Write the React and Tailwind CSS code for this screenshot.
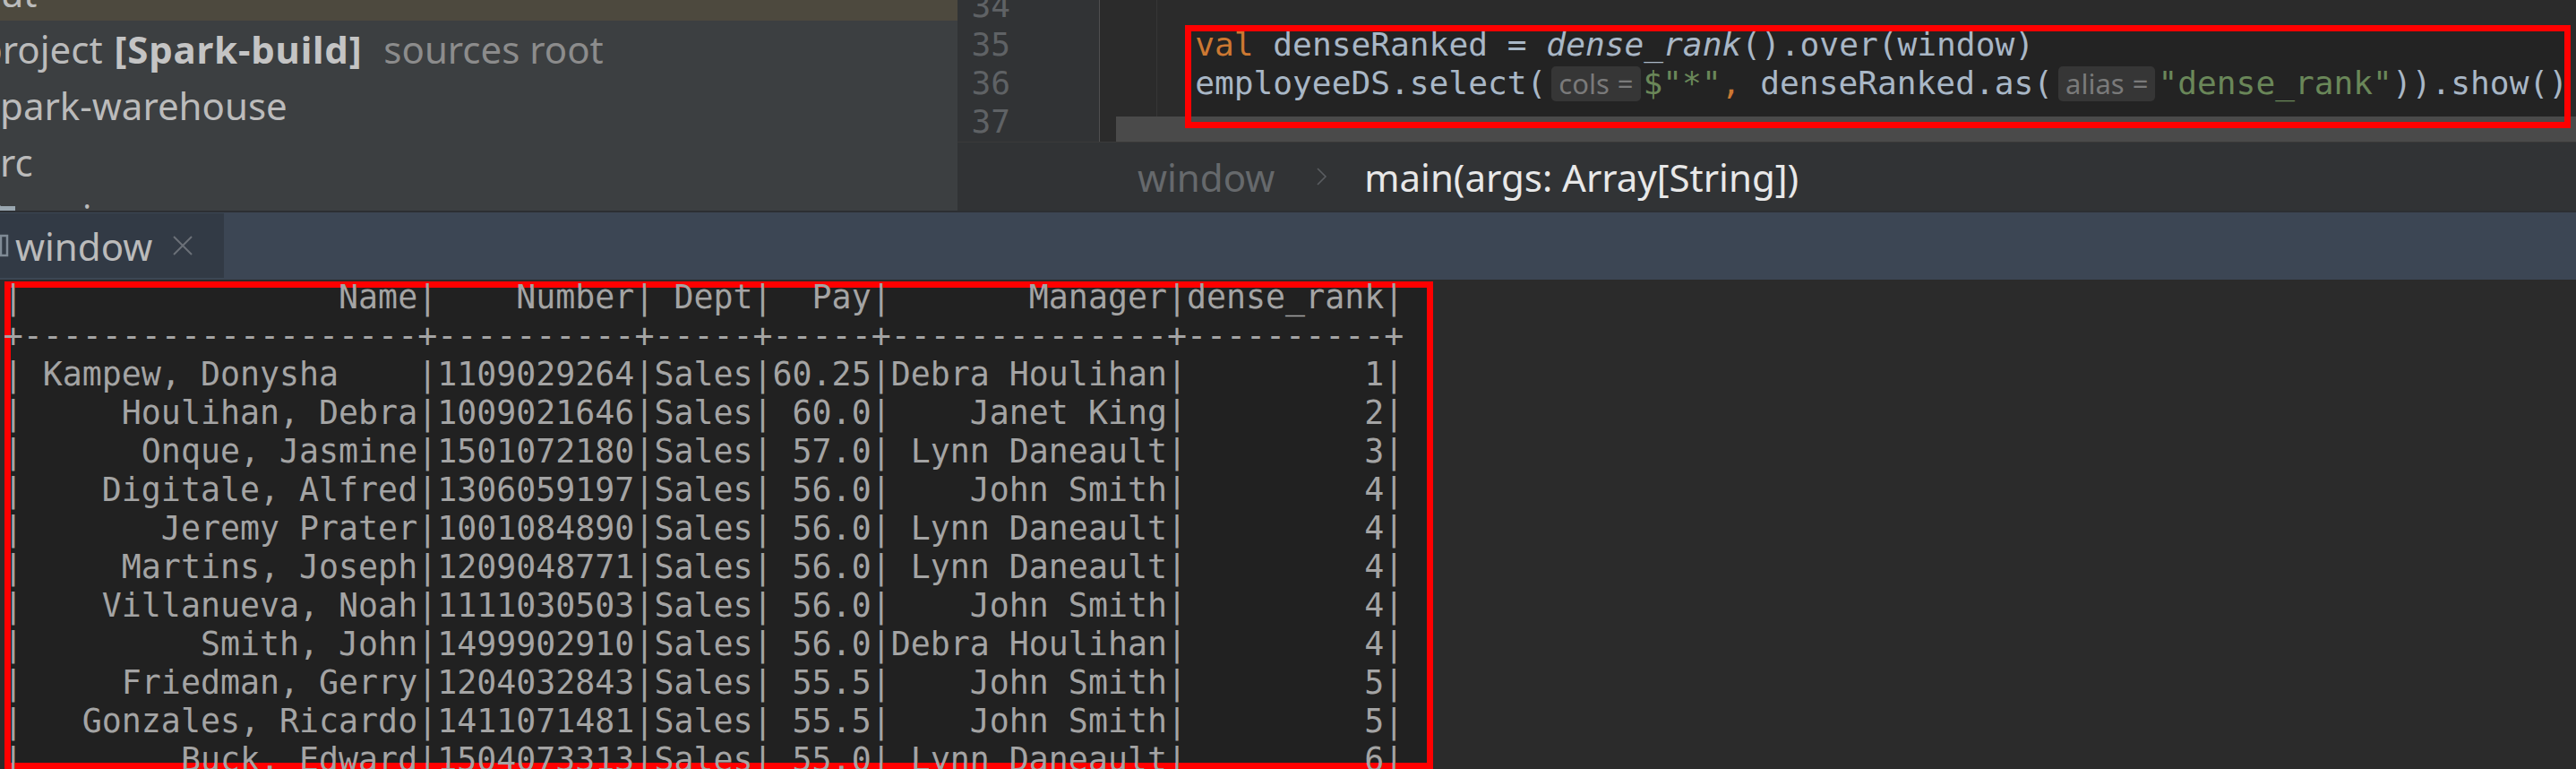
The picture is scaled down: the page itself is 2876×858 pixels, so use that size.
import React from "react"

const UI = "[font-family:'Noto_Sans',sans-serif]"
const MONO = "[font-family:'DejaVu_Sans_Mono',monospace]"

const people = [
  [" Kampew, Donysha    ", "1109029264", "60.25", "Debra Houlihan", "1"],
  ["Houlihan, Debra", "1009021646", "60.0", "Janet King", "2"],
  ["Onque, Jasmine", "1501072180", "57.0", "Lynn Daneault", "3"],
  ["Digitale, Alfred", "1306059197", "56.0", "John Smith", "4"],
  ["Jeremy Prater", "1001084890", "56.0", "Lynn Daneault", "4"],
  ["Martins, Joseph", "1209048771", "56.0", "Lynn Daneault", "4"],
  ["Villanueva, Noah", "1111030503", "56.0", "John Smith", "4"],
  ["Smith, John", "1499902910", "56.0", "Debra Houlihan", "4"],
  ["Friedman, Gerry", "1204032843", "55.5", "John Smith", "5"],
  ["Gonzales, Ricardo", "1411071481", "55.5", "John Smith", "5"],
  ["Buck, Edward", "1504073313", "55.0", "Lynn Daneault", "6"],
]

const row = (a, b, c, d, e, f) =>
  `|${a.padStart(20)}|${b.padStart(10)}|${c.padStart(5)}|${d.padStart(5)}|${e.padStart(14)}|${f.padStart(10)}|`

const sep = "+" + [20, 10, 5, 5, 14, 10].map((n) => "-".repeat(n)).join("+") + "+"

const consoleLines = [
  row("Name", "Number", "Dept", "Pay", "Manager", "dense_rank"),
  sep,
  ...people.map((p) => row(p[0], p[1], "Sales", p[2], p[3], p[4])),
]

function Inlay({ label }) {
  return (
    <span className={`self-start mt-[3px] ml-[6px] mr-[3px] h-[39px] inline-flex items-center gap-[9px] px-[8px] rounded-[5px] bg-[#363636] text-[#7a7a7a] text-[31px] ${UI}`}>
      <span>{label}</span>
      <span>=</span>
    </span>
  )
}

function ProjectTree() {
  return (
    <div className={`w-[1069px] h-full shrink-0 bg-[#3c3f41] overflow-hidden text-[42px] text-[#bbbbbb] whitespace-nowrap ${UI}`}>
      <div className="mt-[-40px]">
        <div className="h-[63px] leading-[63px] bg-[#4d493e]">
          <span className="inline-block ml-[-25px]">out</span>
        </div>
        <div className="h-[63px] leading-[63px] flex">
          <span className="ml-[-23px]">project</span>
          <span className="ml-[13px] font-bold tracking-[0.8px] text-[#c4c4c4]">[Spark-build]</span>
          <span className="ml-[24px] text-[#8c8c8c]">sources root</span>
        </div>
        <div className="h-[63px] leading-[63px]">
          <span className="inline-block ml-[-20px]">spark-warehouse</span>
        </div>
        <div className="h-[63px] leading-[63px]">
          <span className="inline-block ml-[-20px]">src</span>
        </div>
        <div className="h-[63px] leading-[63px] flex items-center">
          <svg className="ml-[-14px] mt-[-5px] shrink-0" width="32" height="32" viewBox="0 0 32 32">
            <path d="M1 2h11l3 3h16v24H1z" fill="#9aa7b0" />
          </svg>
          <span className="ml-[11px]">main</span>
        </div>
      </div>
    </div>
  )
}

function Editor() {
  return (
    <div className="flex-1 flex flex-col min-w-0">
      <div className="relative h-[158px] flex overflow-hidden bg-[#2b2b2b]">
        {/* gutter */}
        <div className="w-[159px] shrink-0 bg-[#313335] border-r border-[#4f4f4f]">
          <div className={`mt-[-15px] w-[59px] text-right text-[36.2px] leading-[43px] text-[#5f6265] ${MONO}`}>
            <div>34</div>
            <div>35</div>
            <div>36</div>
            <div>37</div>
          </div>
        </div>

        {/* code */}
        <div className="relative flex-1">
          <div className="absolute left-[63px] top-0 h-[158px] w-px bg-[#363636]" />
          <div className="absolute left-[95px] top-[28px] w-[1547px] h-[115px] bg-[#232323]" />

          <div className={`relative z-10 mt-[-15px] pl-[19px] text-[36.2px] leading-[43px] text-[#a9b7c6] whitespace-pre ${MONO}`}>
            <div className="h-[43px]"></div>
            <div className="h-[43px] flex items-center">
              <span>{"    "}</span>
              <span className="text-[#cc7832]">val</span>
              <span> denseRanked = </span>
              <span className="italic">dense_rank</span>
              <span>().over(window)</span>
            </div>
            <div className="h-[43px] flex items-center">
              <span>{"    employeeDS.select("}</span>
              <Inlay label="cols" />
              <span className="text-[#6a8759]">$"*"</span>
              <span className="text-[#cc7832]">,</span>
              <span> denseRanked.as(</span>
              <Inlay label="alias" />
              <span className="text-[#6a8759]">"dense_rank"</span>
              <span>)).show()</span>
            </div>
            <div className="h-[43px]"></div>
          </div>

          <div className="absolute z-20 left-[18px] right-0 top-[130px] h-[28px] bg-[#4a4a4a]" />
          <div className="absolute z-30 left-[95px] top-[28px] w-[1547px] h-[115px] border-[7px] border-[#ff0000]" />
        </div>
      </div>

      {/* breadcrumbs */}
      <div className={`h-[77px] bg-[#313335] border-t border-[#3a3a3a] flex items-center pl-[201px] text-[42px] whitespace-nowrap ${UI}`}>
        <span className="text-[#66696c]">window</span>
        <svg className="ml-[46px] mr-[40px]" width="14" height="22" viewBox="0 0 14 22">
          <polyline points="2,2 11,11 2,20" fill="none" stroke="#5a5d61" strokeWidth="1.6" />
        </svg>
        <span className="text-[#e8e8e8]">main(args: Array[String])</span>
      </div>
    </div>
  )
}

function ConsoleTab() {
  return (
    <div className="h-[75px] shrink-0 bg-[#3c4654] pt-px">
      <div className={`w-[250px] h-[72px] bg-[#323a45] flex items-center overflow-hidden text-[42px] text-[#bbbbbb] ${UI}`}>
        <svg className="ml-[-16px] shrink-0" width="26" height="28" viewBox="0 0 26 28">
          <rect x="1" y="3" width="23" height="22" fill="none" stroke="#7f8a95" strokeWidth="2.5" />
          <line x1="17" y1="3" x2="17" y2="25" stroke="#7f8a95" strokeWidth="2.5" />
        </svg>
        <span className="ml-[7px]">window</span>
        <svg className="ml-[22px]" width="24" height="22" viewBox="0 0 24 22">
          <path d="M2 1L22 21M22 1L2 21" stroke="#6b7078" strokeWidth="2" />
        </svg>
      </div>
    </div>
  )
}

function ConsoleOutput() {
  return (
    <div className="relative flex-1 overflow-hidden bg-[#2b2b2b]">
      <div className="absolute left-[5px] top-[2px] w-[1595px] h-[544px] bg-[#212121] border-[7px] border-[#ff0000]" />
      <div className={`relative z-10 mt-[-2px] pl-[3.7px] text-[36.6px] leading-[43px] text-[#a4a4a4] whitespace-pre ${MONO}`}>
        {consoleLines.map((l, i) => (
          <div key={i} className="h-[43px]">{l}</div>
        ))}
      </div>
    </div>
  )
}

export default function App() {
  return (
    <div className="w-[2876px] h-[858px] overflow-hidden flex flex-col bg-[#2b2b2b]">
      <div className="h-[235px] flex shrink-0">
        <ProjectTree />
        <Editor />
      </div>
      <div className="h-[2px] shrink-0 bg-[#2c2f33]" />
      <ConsoleTab />
      <ConsoleOutput />
    </div>
  )
}
